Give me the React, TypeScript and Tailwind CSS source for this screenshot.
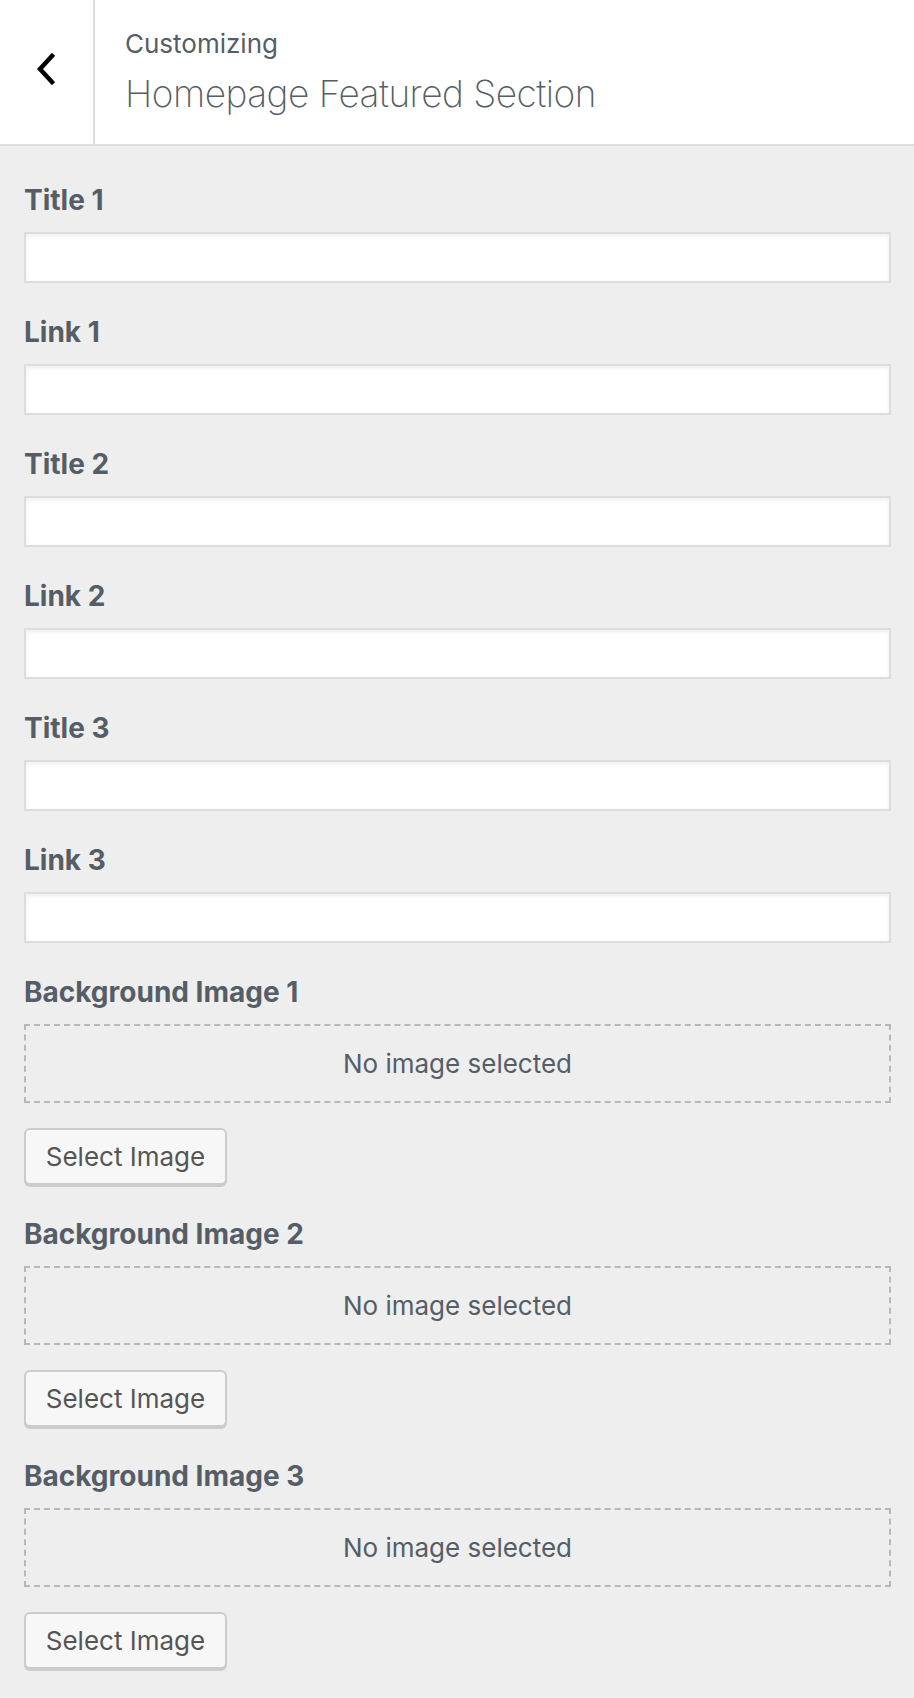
import React from 'react';

const textFields = ['Title 1', 'Link 1', 'Title 2', 'Link 2', 'Title 3', 'Link 3'];
const imageFields = ['Background Image 1', 'Background Image 2', 'Background Image 3'];

const Label: React.FC<{ text: string }> = ({ text }) => (
  <div className="h-[40px] text-[28px] leading-[40px] font-bold text-[#555d66]">
    {text}
  </div>
);

const App: React.FC = () => {
  return (
    <div className="min-h-[1698px] bg-[#eeeeee] font-['Inter',sans-serif]">
      <div className="flex h-[146px] border-b-2 border-[#dddddd] bg-white">
        <button className="flex w-[95px] items-center justify-center border-r-2 border-[#dddddd] pb-[6px] pr-[2px]">
          <svg width="20" height="32" viewBox="0 0 20 32" fill="none">
            <polyline
              points="16,3 4,16 16,29"
              stroke="#000"
              strokeWidth="4.5"
              strokeLinecap="square"
              strokeLinejoin="miter"
            />
          </svg>
        </button>
        <div className="pl-[30px] pt-[28px]">
          <div className="h-[32px] text-[26px] leading-[32px] text-[#555d66]">
            Customizing
          </div>
          <div className="mt-[10px] h-[48px] text-[37px] leading-[48px] font-extralight tracking-[-0.5px] text-[#555d66]">
            Homepage Featured Section
          </div>
        </div>
      </div>

      <div className="flex flex-col gap-[29px] pl-[24px] pr-[23px] pt-[34px]">
        {textFields.map((f) => (
          <div key={f} className="flex flex-col">
            <Label text={f} />
            <input
              type="text"
              className="mt-[12px] h-[51px] w-full border-2 border-[#dddddd] bg-white shadow-[inset_0_2px_4px_rgba(0,0,0,0.07)] outline-none"
            />
          </div>
        ))}
        {imageFields.map((f) => (
          <div key={f} className="flex flex-col">
            <Label text={f} />
            <div className="mt-[12px] flex h-[79px] items-center justify-center border-2 border-dashed border-[#b4b9be] text-[26px] text-[#555d66]">
              No image selected
            </div>
            <div className="mt-[25px]">
              <button className="h-[57px] w-[203px] rounded-[6px] border-2 border-[#cccccc] bg-[#f7f7f7] text-[26px] text-[#555555] shadow-[0_2px_0_#cccccc]">
                Select Image
              </button>
            </div>
          </div>
        ))}
      </div>
    </div>
  );
};

export default App;
